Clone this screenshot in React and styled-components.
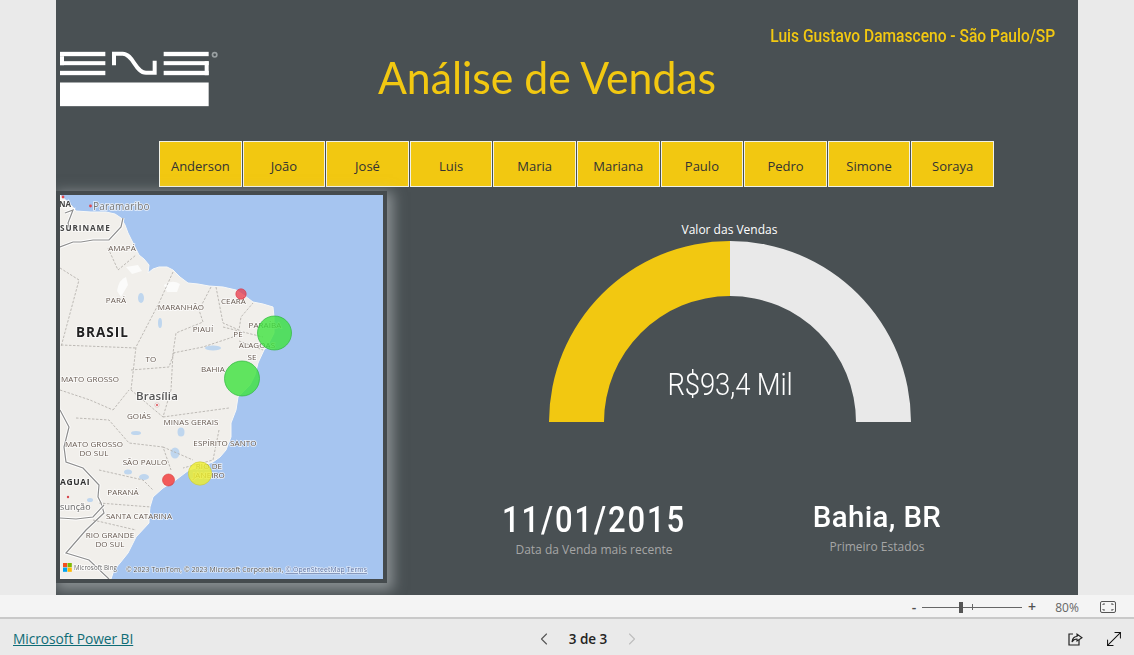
import React from "react";
import styled, { createGlobalStyle } from "styled-components";
import { ChevronLeft, ChevronRight, MoveDiagonal } from "lucide-react";

const Global = createGlobalStyle`
  html, body { margin: 0; padding: 0; height: 100%; overflow: hidden; background: #eaeaea; }
  #root { height: 100%; }
  * { box-sizing: border-box; }
`;

const Page = styled.div`
  width: 1134px; height: 655px; display: flex; flex-direction: column;
  font-family: "Open Sans", "Noto Sans", sans-serif; background: #eaeaea;
`;
const Stage = styled.div`
  height: 595px; padding: 0 56px; flex: none;
`;
const Canvas = styled.main`
  height: 595px; background: #495053; overflow: hidden;
  display: flex; flex-direction: column;
`;
const Header = styled.header`
  height: 141px; display: grid; grid-template-columns: 322px 1fr; grid-template-rows: 46px 1fr;
`;
const LogoBox = styled.div`
  grid-row: 1 / 3; padding: 50px 0 0 4px;
`;
const Author = styled.div`
  justify-self: end; margin: 25px 23px 0 0; color: #f2c811; transform: scaleX(0.89); transform-origin: right center;
  font-family: "Roboto", sans-serif; font-weight: 500; font-size: 17.5px; line-height: 22px; white-space: nowrap;
`;
const Title = styled.h1`
  margin: 0; color: #f2c811; font-family: "Lato", sans-serif; font-weight: 400; transform: scaleX(0.95); transform-origin: left center;
  font-size: 45px; line-height: 62px; white-space: nowrap;
`;
const Slicer = styled.nav`
  margin-left: 103px; width: 835px; height: 46px; flex: none;
  display: grid; grid-template-columns: repeat(10, 1fr); column-gap: 1px;
`;
const SlicerItem = styled.div`
  background: #f2c811; border: 1px solid #f1f1e6; color: #333; padding-top: 3px;
  display: flex; align-items: center; justify-content: center;
  font-size: 13px; font-family: "Open Sans", sans-serif;
`;
const Body = styled.section`
  margin-top: 4px; display: flex; flex: 1; min-height: 0;
`;
const MapFrame = styled.div`
  width: 331px; height: 392px; flex: none; padding: 4px; background: #454b4e;
  box-shadow: 3px 4px 12px 3px rgba(200, 206, 208, 0.5);
`;
const MapSvg = styled.svg`
  display: block; width: 323px; height: 384px; filter: blur(0.3px);
`;
const Label = styled.text`
  font-family: "Open Sans", sans-serif; font-size: ${(p) => p.$size || 8}px;
  font-weight: ${(p) => p.$weight || 400}; fill: ${(p) => p.$color || "#65584f"};
  stroke: rgba(255,255,255,.75); stroke-width: ${(p) => p.$halo ?? 1.6}px; paint-order: stroke;
  letter-spacing: ${(p) => p.$spacing || 0.1}px; text-anchor: ${(p) => p.$anchor || "middle"};
`;
const Panel = styled.div`
  flex: 1; padding-right: 6px; display: flex; flex-direction: column; align-items: stretch;
`;
const GaugeTitle = styled.div`
  margin-top: 30px; height: 20px; text-align: center; color: #fff; font-size: 12px; line-height: 18px;
`;
const GaugeWrap = styled.div`
  position: relative; width: 362px; height: 181px; margin: 0 auto;
`;
const GaugeValue = styled.div`
  position: absolute; left: 0; right: 0; top: 123px; text-align: center; color: #fff; transform: scaleX(0.86);
  font-family: "Roboto", sans-serif; font-weight: 300; font-size: 32px; line-height: 40px; letter-spacing: -0.2px;
`;
const Cards = styled.div`
  display: flex; gap: 63px; padding-left: 97px; margin-top: 74px;
`;
const Card = styled.div`
  width: 220px; text-align: center;
`;
const CardValue = styled.div`
  color: #fff; font-family: "Roboto", sans-serif; font-size: ${(p) => p.$size}px; line-height: 44px; font-weight: ${(p) => p.$weight};
  letter-spacing: ${(p) => p.$spacing}px; white-space: nowrap; margin-top: ${(p) => p.$top}px; transform: scaleX(${(p) => p.$squeeze});
`;
const CardLabel = styled.div`
  color: #a6a6a6; font-size: 12px; line-height: 16px; margin-top: ${(p) => p.$top}px;
`;
const ZoomBar = styled.div`
  height: 24px; flex: none; background: #f4f4f4; border-bottom: 2px solid #c9c9c9; padding-top: 2px;
  display: flex; align-items: center; justify-content: flex-end; color: #555;
`;
const ZoomSign = styled.span`
  font-size: 14px; line-height: 20px; color: #505050; width: ${(p) => p.$w}px; text-align: center; font-weight: 600;
`;
const ZoomTrack = styled.div`
  position: relative; width: 100px; height: 1px; background: #666; margin: 0 5px 0 4px;
`;
const ZoomThumb = styled.span`
  position: absolute; left: 37px; top: -5px; width: 4px; height: 11px; background: #555;
`;
const ZoomTick = styled.span`
  position: absolute; left: 50px; top: -3px; width: 1px; height: 6px; background: #666;
`;
const ZoomPct = styled.span`
  font-size: 12px; color: #666; width: 32px; margin-left: 14px; text-align: center;
`;
const FitBox = styled.svg`
  width: 16px; height: 12px; margin: 0 18px 0 17px; display: block;
`;
const Footer = styled.footer`
  flex: 1; display: flex; align-items: center; padding: 3px 0 0 13px; background: #eaeaea;
`;
const BrandLink = styled.a`
  width: 521px; color: #0f6c76; text-decoration: underline; font-size: 13.8px; white-space: nowrap; letter-spacing: -0.07px;
`;
const Pager = styled.div`
  display: flex; align-items: center; color: #222;
`;
const PagerText = styled.span`
  font-size: 13.5px; font-weight: 600; width: 68px; text-align: center; color: #252423;
`;
const Actions = styled.div`
  margin-left: auto; display: flex; align-items: center; gap: 20px; padding-right: 9px;
`;

const states = [
  "48,53 58,75 76,60", "113,77 99,108 76,152 71,195", "0,73 19,85 1,152", "1,150 76,153",
  "151,92 139,115 143,127 116,138 113,158 111,195", "156,92 163,128 179,135 181,122 193,108",
  "163,132 203,142", "113,158 143,152 173,142", "179,146 203,155", "71,175 109,172 114,158",
  "53,215 69,195", "16,223 49,225 69,248 103,252 111,275", "103,222 169,213", "159,235 153,265 123,273",
  "103,252 133,265", "39,275 83,285 93,295", "39,308 91,312", "33,325 76,335", "0,195 30,205 53,215", "71,195 103,222 111,195",
];
const countries = [
  "0,52 13,47 21,47 33,45 49,45 61,32 63,23", "5,18 13,15 8,28 10,35",
  "0,215 9,232 4,252 6,267 23,273 39,290 38,302 41,308 44,318 26,335 6,358 29,365 49,384",
  "0,323 16,324 33,322 44,310",
];
const labels = [
  [56, 108, "PARÁ"], [62, 56, "AMAPÁ"], [121, 115, "MARANHÃO"], [173.5, 109, "CEARÁ"], [143, 137, "PIAUÍ"],
  [205, 133, "PARAÍBA"], [178, 142, "PE"], [197, 153, "ALAGOAS"], [192, 165, "SE"], [91, 167, "TO"],
  [153, 177, "BAHIA"], [79, 224, "GOIÁS"], [131, 230, "MINAS GERAIS"], [165, 251, "ESPÍRITO SANTO"],
  [34, 252, "MATO GROSSO"], [34, 261, "DO SUL"], [85, 270, "SÃO PAULO"], [149, 274, "RIO DE"], [149, 283, "JANEIRO"],
  [63, 300, "PARANÁ"], [79, 324, "SANTA CATARINA"], [50, 343, "RIO GRANDE"], [50, 352, "DO SUL"],
];

const BrazilMap = () => (
  <MapSvg viewBox="0 0 323 384">
    <rect width="323" height="384" fill="#a6c5f0" />
    <path
      d="M0,0 L11,10 L16,16 L31,17 L46,17 L55,19 L61,23 L65,30 L68,38 L74,50 L79,60 L84,64 L89,70 L88,78 L93,74 L99,72 L107,72 L113,75 L120,82 L128,88 L138,89 L149,91 L163,92 L176,95 L185,101 L193,107 L203,109 L213,112 L214,122 L214,138 L209,148 L204,155 L198,168 L195,180 L190,190 L178,202 L176,215 L171,228 L171,242 L166,255 L160,262 L153,267 L139,272 L129,275 L113,287 L103,293 L93,302 L90,312 L89,322 L89,328 L76,342 L68,358 L60,368 L54,375 L51,384 L0,384 Z"
      fill="#f1efeb" stroke="#f8f8f6" strokeWidth="1" strokeLinejoin="round"
    />
    <path d="M0,0 L11,10 L16,16 L4,15 L0,10 Z" fill="#f7f6f3" />
    <path d="M104,90 q8,-6 16,-1 l-3,8 h-10z M57,96 q2,-12 9,-14 l2,8 -7,12z M66,72 l12,-2 4,6 -10,3z" fill="#fbfbfa" />
    <g fill="#bfd6ee">
      <ellipse cx="81" cy="103" rx="3" ry="5" />
      <ellipse cx="153" cy="153" rx="8" ry="2.5" />
      <ellipse cx="121" cy="237" rx="3.5" ry="4.5" />
      <ellipse cx="115" cy="258" rx="4.5" ry="5.5" />
      <ellipse cx="68" cy="277" rx="4" ry="2.5" />
      <ellipse cx="84" cy="282" rx="5" ry="3" />
      <ellipse cx="76" cy="238" rx="5" ry="2" />
      <ellipse cx="30" cy="305" rx="3" ry="2" />
      <ellipse cx="100" cy="128" rx="2" ry="5" />
    </g>
    {countries.map((p) => (
      <g key={p}>
        <polyline points={p} fill="none" stroke="#fff" strokeWidth="3" />
        <polyline points={p} fill="none" stroke="#8e8e8e" strokeWidth="1.2" />
      </g>
    ))}
    {states.map((p) => (
      <polyline key={p} points={p} fill="none" stroke="#b0aca7" strokeWidth="0.8" strokeDasharray="2.5 1.5" />
    ))}
    <circle cx="3" cy="2" r="1.4" fill="#e0484f" />
    <circle cx="30.5" cy="11" r="1.4" fill="#e0484f" />
    <circle cx="97" cy="210" r="2.2" fill="#fff" stroke="#c8a0a0" strokeWidth=".5" />
    <circle cx="97" cy="210" r="1" fill="#d8474d" />
    <circle cx="8" cy="302" r="1.2" fill="#d8474d" />
    <Label x="33" y="15" $anchor="start" $size={10} $color="#777" $spacing={0.2}>Paramaribo</Label>
    <Label x="-1" y="12" $anchor="start" $size={8} $weight={700} $color="#444">NA</Label>
    <Label x="0" y="36" $anchor="start" $size={8.2} $weight={700} $color="#444" $spacing={0.9}>SURINAME</Label>
    <Label x="16" y="142" $anchor="start" $size={13.5} $weight={700} $color="#222" $spacing={1}>BRASIL</Label>
    <Label x="1" y="187" $anchor="start" $size={8} $spacing={0.1}>MATO GROSSO</Label>
    <Label x="97" y="205" $size={11.5} $weight={600} $color="#555">Brasília</Label>
    <Label x="0" y="290" $anchor="start" $size={8.5} $weight={700} $color="#333" $spacing={0.6}>AGUAI</Label>
    <Label x="0" y="315" $anchor="start" $size={9} $color="#666">sunção</Label>
    {labels.map(([x, y, t]) => (
      <Label key={t + y} x={x} y={y}>{t}</Label>
    ))}
    <circle cx="181" cy="99" r="5.2" fill="#e8394a" fillOpacity=".75" stroke="#d8333f" strokeWidth=".6" />
    <circle cx="214.5" cy="138" r="17" fill="#3fe23f" fillOpacity=".8" stroke="#2fb83f" strokeWidth=".7" />
    <circle cx="182" cy="183.5" r="17.5" fill="#3fe23f" fillOpacity=".82" stroke="#2fb83f" strokeWidth=".7" />
    <circle cx="108.5" cy="285" r="6" fill="#f2403f" fillOpacity=".85" stroke="#d63a3a" strokeWidth=".6" />
    <circle cx="140" cy="278.5" r="11.7" fill="#eeee2c" fillOpacity=".8" stroke="#c8c83a" strokeWidth=".6" />
    <rect x="3" y="368" width="4.2" height="4.2" fill="#f25022" />
    <rect x="7.6" y="368" width="4.2" height="4.2" fill="#7fba00" />
    <rect x="3" y="372.6" width="4.2" height="4.2" fill="#00a4ef" />
    <rect x="7.6" y="372.6" width="4.2" height="4.2" fill="#ffb900" />
    <Label x="14" y="375" $anchor="start" $size={6.2} $color="#666" $spacing={0}>Microsoft Bing</Label>
    <Label x="66" y="377" $anchor="start" $size={6.8} $color="#555" $spacing={0} $halo={1.2}>© 2023 TomTom, © 2023 Microsoft Corporation, <tspan textDecoration="underline" fill="#5a6fa0">© OpenStreetMap</tspan>  <tspan textDecoration="underline" fill="#5a6fa0">Terms</tspan></Label>
  </MapSvg>
);

const Logo = () => (
  <svg width="160" height="57" viewBox="12 90 480 170" style={{ display: "block" }}>
    <g fill="#fff">
      <rect x="12" y="95" width="136" height="13" />
      <rect x="12" y="108" width="12" height="27" />
      <rect x="12" y="123" width="136" height="12" />
      <rect x="12" y="152" width="136" height="13" />
      <rect x="323" y="95" width="135" height="13" />
      <rect x="323" y="123" width="135" height="12" />
      <rect x="446" y="123" width="12" height="42" />
      <rect x="323" y="152" width="135" height="13" />
      <rect x="12" y="187" width="446" height="71" />
    </g>
    <path d="M174,135 V101 H200 C232,101 238,158 270,158 H296 V122" fill="none" stroke="#fff" strokeWidth="12" />
    <circle cx="476" cy="104" r="9" fill="#9aa0a2" />
    <circle cx="476" cy="104" r="4" fill="#495053" />
  </svg>
);

const Gauge = () => (
  <GaugeWrap>
    <svg width="362" height="181" viewBox="0 0 362 181" style={{ display: "block" }}>
      <path d="M181,0 A181,181 0 0 1 362,181 H307 A126,126 0 0 0 181,55 Z" fill="#e9e9e9" />
      <path d="M0,181 A181,181 0 0 1 181,0 V55 A126,126 0 0 0 55,181 Z" fill="#f2c811" />
    </svg>
    <GaugeValue>R$93,4 Mil</GaugeValue>
  </GaugeWrap>
);

const people = ["Anderson", "João", "José", "Luis", "Maria", "Mariana", "Paulo", "Pedro", "Simone", "Soraya"];

export default function App() {
  return (
    <Page>
      <Global />
      <Stage>
        <Canvas>
          <Header>
            <LogoBox><Logo /></LogoBox>
            <Author>Luis Gustavo Damasceno - São Paulo/SP</Author>
            <Title>Análise de Vendas</Title>
          </Header>
          <Slicer>
            {people.map((n) => <SlicerItem key={n}>{n}</SlicerItem>)}
          </Slicer>
          <Body>
            <MapFrame><BrazilMap /></MapFrame>
            <Panel>
              <GaugeTitle>Valor das Vendas</GaugeTitle>
              <Gauge />
              <Cards>
                <Card>
                  <CardValue $size={36} $spacing={2.2} $top={2} $squeeze={0.86} $weight={500}>11/01/2015</CardValue>
                  <CardLabel $top={0}>Data da Venda mais recente</CardLabel>
                </Card>
                <Card>
                  <CardValue $size={30} $spacing={0.4} $top={-1} $squeeze={0.98} $weight={500}>Bahia, BR</CardValue>
                  <CardLabel $top={0}>Primeiro Estados</CardLabel>
                </Card>
              </Cards>
            </Panel>
          </Body>
        </Canvas>
      </Stage>
      <ZoomBar>
        <ZoomSign $w={8}>-</ZoomSign>
        <ZoomTrack><ZoomThumb /><ZoomTick /></ZoomTrack>
        <ZoomSign $w={10}>+</ZoomSign>
        <ZoomPct>80%</ZoomPct>
        <FitBox viewBox="0 0 16 12">
          <rect x=".5" y=".5" width="15" height="11" rx="1.5" fill="none" stroke="#555" />
          <path d="M3,4 V3 H5 M11,3 H13 V4 M3,8 V9 H5 M11,9 H13 V8" fill="none" stroke="#555" />
        </FitBox>
      </ZoomBar>
      <Footer>
        <BrandLink href="#">Microsoft Power BI</BrandLink>
        <Pager>
          <ChevronLeft size={20} color="#555" strokeWidth={1.3} />
          <PagerText>3 de 3</PagerText>
          <ChevronRight size={20} color="#bdbdbd" strokeWidth={1.3} />
        </Pager>
        <Actions>
          <svg width="16" height="16" viewBox="0 0 16 16">
            <path d="M6,3 H2 V14 H12 V9" fill="none" stroke="#222" strokeWidth="1.2" />
            <path d="M5,11 C5,7 8,5.5 10,5.5 V3 L15,6.8 L10,10 V8 C8,8 6,9 5,11 Z" fill="none" stroke="#222" strokeWidth="1.1" />
          </svg>
          <MoveDiagonal size={22} color="#111" strokeWidth={1.1} />
        </Actions>
      </Footer>
    </Page>
  );
}
